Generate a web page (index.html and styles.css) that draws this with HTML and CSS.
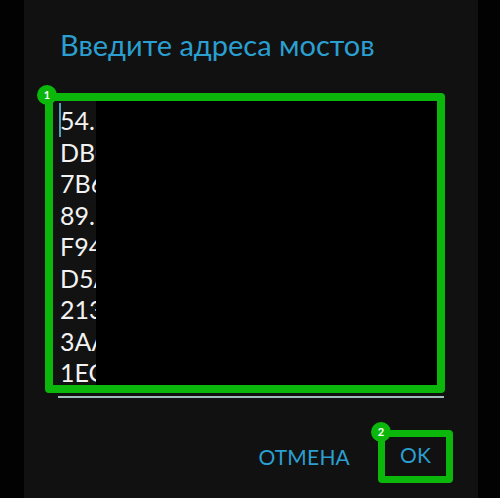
FILE: index.html
```html
<!DOCTYPE html>
<html lang="ru">
<head>
    <meta charset="UTF-8">
    <meta name="viewport" content="width=device-width, initial-scale=1.0">
    <title>Адреса мостов</title>
    <link rel="stylesheet" href="styles.css">
</head>
<body>
    <div class="dialog">
        <h1 class="dialog-title">Введите адреса мостов</h1>

        <div class="field-wrap">
            <div class="field hl">
                <div class="field-text">
                    <span class="cursor"></span>
                    <div>54.36.205.38:443</div>
                    <div>DB0F6A2C19</div>
                    <div>7B6C1E0A</div>
                    <div>89.163.22.7</div>
                    <div>F94D0C2B</div>
                    <div>D5A1E7B3</div>
                    <div>213.32.4.9</div>
                    <div>3AA0F8C1</div>
                    <div>1EC95B2D</div>
                </div>
            </div>
            <span class="badge badge-1">1</span>
        </div>
        <div class="underline"></div>

        <div class="actions">
            <button class="btn">ОТМЕНА</button>
            <div class="ok-wrap">
                <button class="btn btn-ok hl">OK</button>
                <span class="badge badge-2">2</span>
            </div>
        </div>
    </div>
</body>
</html>
```

FILE: styles.css
```css
* {
    margin: 0;
    padding: 0;
    box-sizing: border-box;
    font-family: Lato, "Open Sans", sans-serif;
}
body {
    background-color: #020202;
    width: 500px;
    height: 498px;
    overflow: hidden;
}
.dialog {
    margin-left: 24px;
    width: 454px;
    height: 498px;
    background: #111111;
    padding-top: 27px;
}
.dialog-title {
    font-size: 29px;
    font-weight: normal;
    color: #2a9fd0;
    padding-left: 36px;
    line-height: 36px;
}

/* text field with highlight box */
.field-wrap {
    position: relative;
    margin-left: 21px;
    margin-top: 30px;
    width: 400px;
}
.hl {
    border: 8px solid #0bb70b;
    border-radius: 4px;
}
.field {
    height: 300px;
    background: #000;
}
.field-text {
    position: relative;
    width: 43px;
    height: 100%;
    background: #121212;
    overflow: hidden;
    white-space: nowrap;
    padding-top: 4px;
    padding-left: 7px;
    color: #f2f2f2;
    font-size: 25px;
    line-height: 31.5px;
}
.cursor {
    position: absolute;
    left: 6px;
    top: 2px;
    width: 2px;
    height: 34px;
    background: #4fa3b5;
}
.badge {
    position: absolute;
    width: 20px;
    height: 20px;
    border-radius: 50%;
    background: #0bb70b;
    color: #fff;
    font-size: 11px;
    font-weight: bold;
    line-height: 20px;
    text-align: center;
}
.badge-1 {
    left: -8px;
    top: -8px;
}
.underline {
    margin-left: 34px;
    margin-top: 3px;
    width: 386px;
    height: 2px;
    background: #a3bcbc;
}

/* buttons */
.actions {
    display: flex;
    justify-content: flex-end;
    align-items: center;
    margin-top: 32px;
    padding-right: 25px;
    gap: 28px;
}
.btn {
    background: none;
    border: none;
    color: #2a9fd0;
    font-size: 21px;
    letter-spacing: 0.2px;
}
.ok-wrap {
    position: relative;
}
.btn-ok {
    display: block;
    width: 75px;
    height: 53px;
    border-width: 7px;
    border-style: solid;
    border-color: #0bb70b;
    padding-bottom: 4px;
}
.badge-2 {
    left: -7px;
    top: -8px;
}
```
